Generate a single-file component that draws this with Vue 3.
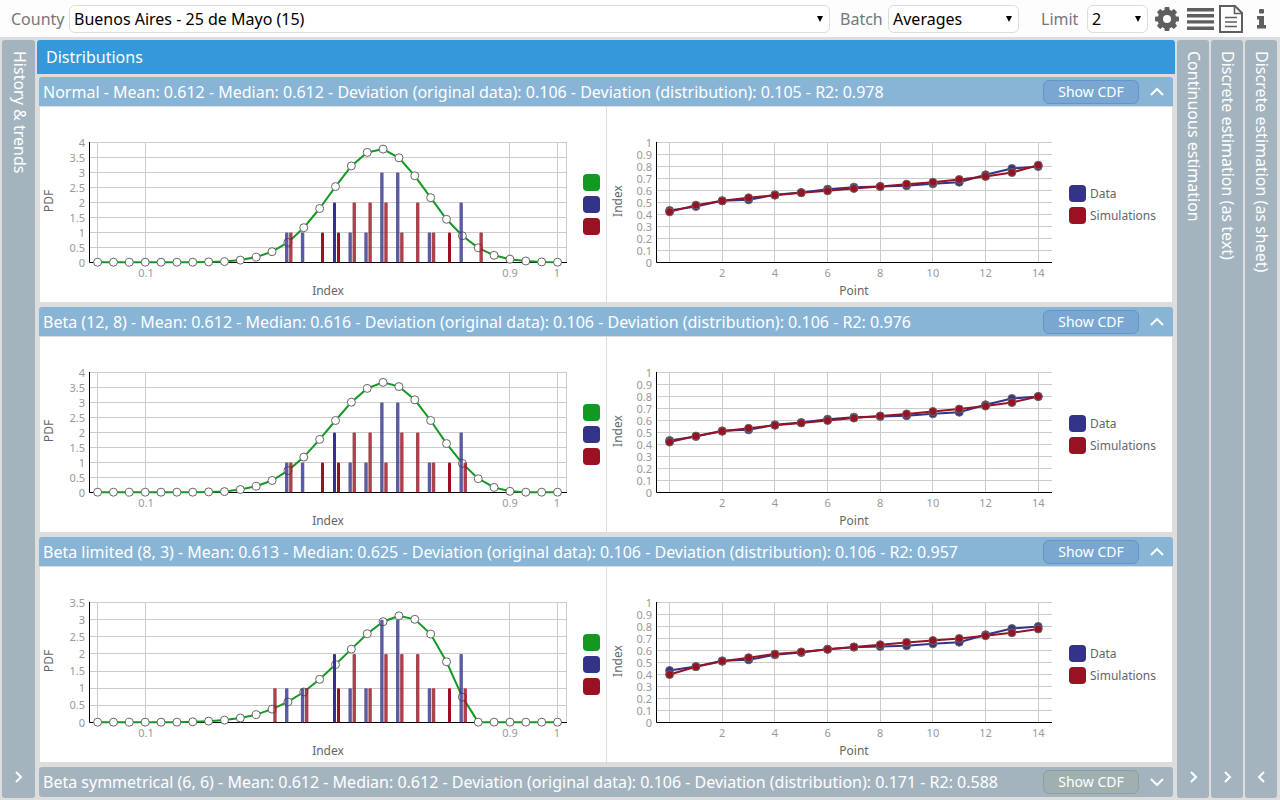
<script setup>
import { ref, reactive } from 'vue'

const county = ref('Buenos Aires - 25 de Mayo (15)')
const batch = ref('Averages')
const limit = ref('2')

const observedBars = { 12: 1, 13: 1, 15: 2, 16: 1, 17: 1, 18: 3, 19: 3, 21: 1, 23: 2 }
const observed = [0.433, 0.467, 0.514, 0.522, 0.564, 0.583, 0.611, 0.628, 0.633, 0.639, 0.656, 0.669, 0.731, 0.783, 0.8]

const panels = reactive([
  {
    open: true,
    title: 'Normal - Mean: 0.612 - Median: 0.612 - Deviation (original data): 0.106 - Deviation (distribution): 0.105 - R2: 0.978',
    max: 4,
    pdf: [0.01, 0.01, 0.01, 0.01, 0.01, 0.01, 0.01, 0.02, 0.03, 0.08, 0.18, 0.36, 0.67, 1.16, 1.8, 2.53, 3.22, 3.67, 3.78, 3.49, 2.89, 2.16, 1.44, 0.89, 0.49, 0.24, 0.11, 0.05, 0.02, 0.01],
    simBars: { 12: 1, 14: 1, 15: 1, 16: 2, 17: 2, 18: 2, 19: 1, 20: 2, 21: 1, 22: 1, 24: 1 },
    sim: [0.422, 0.478, 0.514, 0.539, 0.561, 0.581, 0.597, 0.617, 0.633, 0.653, 0.669, 0.692, 0.717, 0.75, 0.811]
  },
  {
    open: true,
    title: 'Beta (12, 8) - Mean: 0.612 - Median: 0.616 - Deviation (original data): 0.106 - Deviation (distribution): 0.106 - R2: 0.976',
    max: 4,
    pdf: [0.01, 0.01, 0.01, 0.01, 0.01, 0.01, 0.01, 0.02, 0.03, 0.1, 0.21, 0.4, 0.73, 1.18, 1.77, 2.4, 3.01, 3.47, 3.67, 3.53, 3.09, 2.4, 1.63, 0.97, 0.46, 0.17, 0.04, 0.01, 0.01, 0.01],
    simBars: { 12: 1, 14: 1, 15: 1, 16: 2, 17: 2, 18: 1, 19: 2, 20: 2, 21: 1, 22: 1, 23: 1 },
    sim: [0.42, 0.47, 0.51, 0.535, 0.56, 0.58, 0.6, 0.62, 0.638, 0.655, 0.675, 0.695, 0.72, 0.75, 0.8]
  },
  {
    open: true,
    title: 'Beta limited (8, 3) - Mean: 0.613 - Median: 0.625 - Deviation (original data): 0.106 - Deviation (distribution): 0.106 - R2: 0.957',
    max: 3.5,
    pdf: [0.01, 0.01, 0.01, 0.01, 0.01, 0.01, 0.02, 0.04, 0.07, 0.13, 0.23, 0.39, 0.6, 0.89, 1.26, 1.69, 2.14, 2.59, 2.94, 3.11, 3.01, 2.58, 1.77, 0.74, 0.01, 0.01, 0.01, 0.01, 0.01, 0.01],
    simBars: { 11: 1, 13: 1, 15: 1, 16: 2, 17: 1, 18: 2, 19: 2, 20: 2, 21: 1, 22: 1, 23: 1 },
    sim: [0.4, 0.465, 0.51, 0.54, 0.57, 0.588, 0.61, 0.63, 0.648, 0.667, 0.683, 0.7, 0.723, 0.748, 0.78]
  },
  {
    open: false,
    title: 'Beta symmetrical (6, 6) - Mean: 0.612 - Median: 0.612 - Deviation (original data): 0.106 - Deviation (distribution): 0.171 - R2: 0.588',
    max: 4,
    pdf: [],
    simBars: {},
    sim: []
  }
])

const rightTabs = [
  { label: 'Continuous estimation', path: 'M2 1l5 5-5 5' },
  { label: 'Discrete estimation (as text)', path: 'M2 1l5 5-5 5' },
  { label: 'Discrete estimation (as sheet)', path: 'M7 1l-5 5 5 5' }
]

const BASE = 155.5
const PLOT = 120
const px = (i) => 57.6 + i * 15.86
const py = (v, max) => BASE - (v * PLOT) / max
const line = (p) => p.pdf.map((v, i) => `${px(i)},${py(v, p.max)}`).join(' ')
const ticks = (max) => Array.from({ length: max * 2 + 1 }, (_, k) => k / 2)
const bars = (set, shift, max) =>
  Object.entries(set).map(([i, n]) => {
    const solid = [14, 15, 22].includes(+i)
    const left = px(+i) + shift - 1.5
    return {
      x: solid ? Math.round(left) : left,
      w: solid ? 3 : 3.4,
      y: py(n, max),
      h: (n * PLOT) / max,
      solid
    }
  })

const qx = (i) => 62.6 + i * 26.33
const qline = (a) => a.map((v, i) => `${qx(i)},${py(v, 1)}`).join(' ')
const tenths = Array.from({ length: 11 }, (_, k) => k)
const evens = [2, 4, 6, 8, 10, 12, 14]
const gridX = (x) => Math.floor(x) + 0.5
const gridY = (y) => Math.floor(y) + 0.5
</script>

<template>
  <div class="page">
    <header class="toolbar">
      <label class="lbl county" for="county">County</label>
      <div class="pick grow">
        <select id="county" v-model="county"><option>Buenos Aires - 25 de Mayo (15)</option></select>
        <svg class="arrow" viewBox="0 0 6 6"><path d="M0 0h6L3 6z" /></svg>
      </div>
      <label class="lbl batch" for="batch">Batch</label>
      <div class="pick mid">
        <select id="batch" v-model="batch"><option>Averages</option></select>
        <svg class="arrow" viewBox="0 0 6 6"><path d="M0 0h6L3 6z" /></svg>
      </div>
      <label class="lbl limit" for="limit">Limit</label>
      <div class="pick small">
        <select id="limit" v-model="limit"><option>2</option></select>
        <svg class="arrow" viewBox="0 0 6 6"><path d="M0 0h6L3 6z" /></svg>
      </div>
      <nav class="tools">
        <button type="button" aria-label="Settings">
          <svg width="24" height="24" viewBox="0 0 24 24">
            <g fill="#5f5f5f">
              <rect v-for="a in [0, 45, 90, 135]" :key="a" x="9.500" y="0" width="5" height="24" rx="1" :transform="`rotate(${a} 12 12)`" />
              <circle cx="12" cy="12" r="9.500" />
            </g>
            <circle cx="12" cy="12" r="4" fill="#fdfdfe" />
          </svg>
        </button>
        <button type="button" aria-label="List">
          <svg width="27" height="24" viewBox="0 0 27 24">
            <path fill="#5f5f5f" d="M0 1h27v3.400H0zM0 7h27v3.400H0zM0 13.200h27v3.400H0zM0 19.500h27v3.400H0z" />
          </svg>
        </button>
        <button type="button" aria-label="Document">
          <svg width="24" height="28" viewBox="0 0 24 28" fill="none" stroke="#5f5f5f" stroke-width="2">
            <path d="M1 1h15l7 7v19H1z" />
            <path d="M15.500 1v7.500H23" stroke-width="1.600" />
            <path d="M6 12.500h12M6 17h12M6 21.500h12" stroke-width="1.600" />
          </svg>
        </button>
        <button type="button" aria-label="Information">
          <svg width="10" height="20" viewBox="0 0 10 20" fill="#5f5f5f">
            <rect x="2" y="0" width="5" height="4.500" rx="1" />
            <path d="M0 7h7v9h2v3.500H0V16h2v-5.500H0z" />
          </svg>
        </button>
      </nav>
    </header>

    <main class="columns">
      <button type="button" class="tab left">
        <span>History &amp; trends</span>
        <svg width="9" height="12" viewBox="0 0 9 12"><path d="M2 1l5 5-5 5" /></svg>
      </button>

      <section class="center">
        <h1>Distributions</h1>
        <div class="stack">
          <article v-for="p in panels" :key="p.title" class="panel" :class="{ closed: !p.open }">
            <div class="head">
              <h2>{{ p.title }}</h2>
              <button type="button" class="cdf">Show CDF</button>
              <button type="button" class="fold" :aria-label="p.open ? 'Collapse' : 'Expand'" @click="p.open = !p.open">
                <svg width="14" height="10" viewBox="0 0 14 10"><path :d="p.open ? 'M1 8l6-6 6 6' : 'M1 2l6 6 6-6'" /></svg>
              </button>
            </div>
            <div v-if="p.open && p.pdf.length" class="body">
              <svg class="chart" viewBox="0 0 565 195" preserveAspectRatio="xMinYMin meet">
                <g class="grid">
                  <line v-for="t in ticks(p.max).slice(1)" :key="t" x1="50" x2="527" :y1="gridY(py(t, p.max))" :y2="gridY(py(t, p.max))" />
                  <line v-for="x in [57.500, 105.500, 469.500, 517.500, 526.500]" :key="x" :x1="x" :x2="x" y1="35" y2="155" />
                </g>
                <path class="axis" d="M49.500 35v120.500H527" />
                <polyline class="curve" :points="line(p)" />
                <circle v-for="(v, i) in p.pdf" :key="i" class="dot" :cx="px(i)" :cy="py(v, p.max)" r="4" />
                <rect v-for="b in bars(observedBars, -1.400, p.max)" :key="'d' + b.x" class="data" :class="{ soft: !b.solid }" :x="b.x" :y="b.y" :width="b.w" :height="b.h" rx="1" />
                <rect v-for="b in bars(p.simBars, 2.700, p.max)" :key="'s' + b.x" class="sim" :class="{ soft: !b.solid }" :x="b.x" :y="b.y" :width="b.w" :height="b.h" rx="1" />
                <g class="tick end">
                  <text v-for="t in ticks(p.max)" :key="t" x="45" :y="py(t, p.max) + 4">{{ t }}</text>
                </g>
                <g class="tick middle">
                  <text x="106" y="170">0.1</text>
                  <text x="470" y="170">0.9</text>
                  <text x="517" y="170">1</text>
                </g>
                <text class="name" x="288" y="188">Index</text>
                <text class="name" transform="translate(13 94) rotate(-90)">PDF</text>
                <rect class="curve-key" x="543" y="67" width="17" height="17" rx="4" />
                <rect class="data" x="543" y="89" width="17" height="17" rx="4" />
                <rect class="sim" x="543" y="111" width="17" height="17" rx="4" />
              </svg>
              <svg class="chart second" viewBox="0 0 560 195" preserveAspectRatio="xMinYMin meet">
                <g class="grid">
                  <line v-for="t in tenths.slice(1)" :key="t" x1="50" x2="445" :y1="BASE - t * 12" :y2="BASE - t * 12" />
                  <line v-for="t in [0, ...evens]" :key="t" :x1="gridX(qx(t))" :x2="gridX(qx(t))" y1="35" y2="155" />
                </g>
                <path class="axis" d="M49.500 35v120.500H445" />
                <polyline class="data-line" :points="qline(observed)" />
                <circle v-for="(v, i) in observed" :key="'d' + i" class="point data" :cx="qx(i)" :cy="py(v, 1)" r="4" />
                <polyline class="sim-line" :points="qline(p.sim)" />
                <circle v-for="(v, i) in p.sim" :key="'s' + i" class="point sim" :cx="qx(i)" :cy="py(v, 1)" r="4" />
                <g class="tick end">
                  <text v-for="t in tenths" :key="t" x="45" :y="BASE - t * 12 + 4">{{ t / 10 }}</text>
                </g>
                <g class="tick middle">
                  <text v-for="t in evens" :key="t" :x="qx(t)" y="170">{{ t }}</text>
                </g>
                <text class="name" x="247" y="188">Point</text>
                <text class="name" transform="translate(15 94) rotate(-90)">Index</text>
                <rect class="data" x="462" y="78" width="17" height="17" rx="4" />
                <rect class="sim" x="462" y="100" width="17" height="17" rx="4" />
                <text class="key" x="483" y="91">Data</text>
                <text class="key" x="483" y="113">Simulations</text>
              </svg>
            </div>
          </article>
        </div>
      </section>

      <button v-for="t in rightTabs" :key="t.label" type="button" class="tab">
        <span>{{ t.label }}</span>
        <svg width="9" height="12" viewBox="0 0 9 12"><path :d="t.path" /></svg>
      </button>
    </main>
  </div>
</template>

<style>
body {
  background: #ddd;
}
</style>

<style scoped>
.page {
  display: flex;
  flex-direction: column;
  height: 100vh;
  overflow: hidden;
  background: #ddd;
  font-family: "Noto Sans", "Open Sans", sans-serif;
  font-size: 16px;
}
button {
  margin: 0;
  padding: 0;
  border: 0;
  background: none;
  font: inherit;
  color: inherit;
  cursor: pointer;
}
.toolbar {
  display: flex;
  align-items: center;
  flex: none;
  height: 37px;
  padding: 0 13px 0 11px;
  background: #fdfdfe;
}
.lbl {
  flex: none;
  color: #777;
}
.county { width: 58px; }
.batch { width: 48px; margin-left: 10px; }
.limit { width: 46px; margin-left: 22px; }
.pick {
  position: relative;
  flex: none;
}
.grow { flex: 1; min-width: 0; }
.mid { width: 131px; }
.small { width: 61px; }
select {
  display: block;
  appearance: none;
  width: 100%;
  height: 28px;
  padding: 0 20px 0 4px;
  border: 1px solid #ddd;
  border-radius: 6px;
  background: #fff;
  font: inherit;
  color: #000;
}
.arrow {
  position: absolute;
  right: 7px;
  top: 11px;
  width: 6px;
  height: 6px;
  pointer-events: none;
}
.tools {
  display: flex;
  align-items: center;
  margin-left: 7px;
}
.tools button { display: flex; }
.tools button:nth-child(2) { margin-left: 8px; }
.tools button:nth-child(3) { margin-left: 5px; }
.tools button:nth-child(4) { margin-left: 14px; }
.columns {
  display: flex;
  flex: 1;
  min-height: 0;
  gap: 2px;
  padding: 3px 3px 2px 2px;
}
.tab {
  display: flex;
  flex-direction: column;
  align-items: center;
  justify-content: space-between;
  flex: none;
  width: 32px;
  padding: 11px 0 15px;
  border-radius: 3px;
  background: #a4b4bf;
  color: #fff;
  line-height: 22px;
}
.tab.left { width: 33px; }
.tab span {
  padding-left: 2px;
  writing-mode: vertical-rl;
}
.tab svg, .fold svg {
  fill: none;
  stroke: #fff;
  stroke-width: 2;
}
.center {
  flex: 1;
  min-width: 0;
  overflow: hidden;
}
h1 {
  margin: 0;
  padding-left: 9px;
  border-radius: 3px 3px 0 0;
  background: #3498db;
  color: #fff;
  font-size: 16px;
  font-weight: 400;
  line-height: 34px;
}
.stack {
  display: flex;
  flex-direction: column;
  gap: 5px;
  padding: 3px 2px 0;
}
.head {
  display: flex;
  align-items: center;
  height: 29px;
  padding: 0 9px 0 4px;
  border-radius: 3px 3px 0 0;
  background: #88b4d6;
  color: #fff;
}
h2 {
  flex: 1;
  min-width: 0;
  margin: 0;
  overflow: hidden;
  font-size: 16px;
  font-weight: 400;
  line-height: 28px;
  white-space: nowrap;
}
.cdf {
  width: 96px;
  height: 24px;
  margin-right: 11px;
  border: 1px solid #6494c8;
  border-radius: 6px;
  background: #7aa6d2;
  font-size: 14px;
  line-height: 22px;
}
.fold { display: flex; }
.closed .head {
  height: 30px;
  border-radius: 3px;
  background: #a4b4bf;
}
.closed .cdf {
  border-color: #8a9fa8;
  background: #9fb0af;
}
.body {
  display: grid;
  grid-template-columns: 1fr 1fr;
  margin: 1px 1px 0;
  background: #fff;
}
.chart {
  display: block;
  box-sizing: border-box;
  width: 100%;
  height: 195px;
}
.second { border-left: 1px solid #ddd; }
.grid line { stroke: #ccc; }
.axis { fill: none; stroke: #000; }
.curve { fill: none; stroke: #119922; stroke-width: 2; }
.curve-key { fill: #119922; }
.dot { fill: #fff; stroke: #666; }
.data { fill: #333388; }
.sim { fill: #991122; }
.soft { opacity: 0.8; }
.data-line { fill: none; stroke: #333388; stroke-width: 2; }
.sim-line { fill: none; stroke: #991122; stroke-width: 2; }
.point { stroke: #666; }
.tick { fill: #999; font-size: 11px; }
.end { text-anchor: end; }
.middle { text-anchor: middle; }
.name { fill: #666; font-size: 12px; text-anchor: middle; }
.key { fill: #666; font-size: 12px; }
</style>
